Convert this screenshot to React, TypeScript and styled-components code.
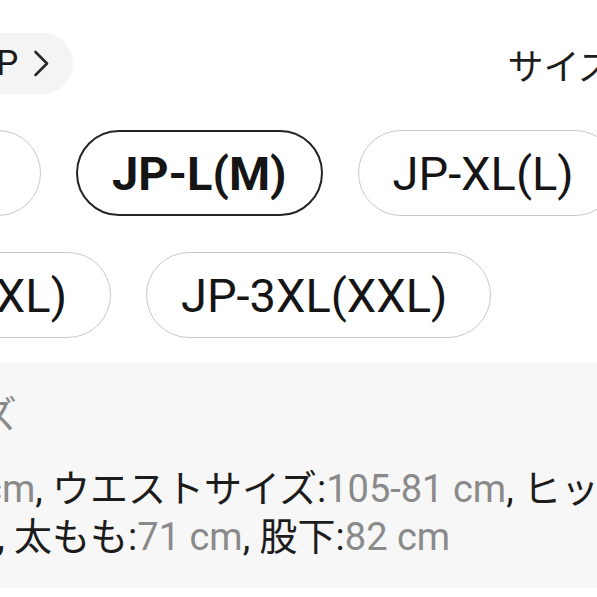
import styled, { createGlobalStyle } from 'styled-components';

const GlobalStyle = createGlobalStyle`
  html, body {
    margin: 0;
    padding: 0;
    background: #ffffff;
  }
  body {
    font-family: Roboto, 'Noto Sans CJK JP', sans-serif;
    color: #1c1c1c;
  }
`;

// rows of size chips, the page is scrolled so the first ones are cut
const sizes = [
  ['JP-M(S)', 'JP-L(M)', 'JP-XL(L)'],
  ['JP-2XL(XL)', 'JP-3XL(XXL)'],
];
const rowShift = [-208, -205];
const selected = 'JP-L(M)';

export default function App() {
  return (
    <Frame>
      <GlobalStyle />
      <TopBar>
        <Selector>
          <SelectorText>JP</SelectorText>
          <svg width='17' height='27' viewBox='0 0 17 27'>
            <polyline
              points='2.5,2 14,13.5 2.5,25'
              fill='none'
              stroke='#2a2a2a'
              strokeWidth='2.6'
              strokeLinecap='round'
              strokeLinejoin='round'
            />
          </svg>
        </Selector>
        <GuideLink>サイズガイド</GuideLink>
      </TopBar>

      <SizeList>
        {sizes.map((row, i) => (
          <SizeRow key={i} shift={rowShift[i]}>
            {row.map((s) => (
              <SizePill key={s} active={s === selected}>
                {s}
              </SizePill>
            ))}
          </SizeRow>
        ))}
      </SizeList>

      <InfoPanel>
        <Line shift={-210}>
          <Muted>モデルサイズ</Muted>
        </Line>
        <Specs>
          <Line shift={-18}>
            <Muted>cm</Muted>, ウエストサイズ:<Muted>105-81 cm</Muted>, ヒップサイズ:
            <Muted>110 cm</Muted>
          </Line>
          <Line shift={-56}>
            <Muted>cm</Muted>, 太もも:<Muted>71 cm</Muted>, 股下:<Muted>82 cm</Muted>
          </Line>
        </Specs>
      </InfoPanel>
    </Frame>
  );
}

const Frame = styled.div`
  width: 597px;
  height: 597px;
  overflow: hidden;
  background: #ffffff;
`;

const TopBar = styled.div`
  display: flex;
  align-items: center;
  gap: 434px;
  padding-top: 33px;
  width: 1200px;
  margin-left: -47px;
`;

const Selector = styled.div`
  display: flex;
  align-items: center;
  gap: 15px;
  height: 61px;
  padding: 0 23px 0 24px;
  background: #f4f4f4;
  border-radius: 0 31px 31px 0;
  box-sizing: border-box;
`;

const SelectorText = styled.span`
  font-size: 35px;
  color: #1c1c1c;
`;

const GuideLink = styled.span`
  font-size: 36px;
  color: #1c1c1c;
  white-space: nowrap;
`;

const SizeList = styled.div`
  display: flex;
  flex-direction: column;
  gap: 36px;
  margin-top: 36px;
`;

const SizeRow = styled.div<{ shift: number }>`
  display: flex;
  gap: 35px;
  width: 1200px;
  margin-left: ${(p) => p.shift}px;
`;

const SizePill = styled.div<{ active?: boolean }>`
  display: flex;
  align-items: center;
  height: 86px;
  padding: ${(p) => (p.active ? '0 34px' : '0 43px 0 34px')};
  box-sizing: border-box;
  border-radius: 43px;
  border: ${(p) => (p.active ? '2.5px solid #242424' : '1.5px solid #c9c9c9')};
  font-size: 47px;
  font-weight: ${(p) => (p.active ? 700 : 400)};
  color: #151515;
  white-space: nowrap;
`;

const InfoPanel = styled.div`
  margin-top: 25px;
  height: 225px;
  box-sizing: border-box;
  padding-top: 28px;
  background: #f7f7f7;
  font-size: 38px;
  line-height: 48px;
`;

const Specs = styled.div`
  margin-top: 26px;
`;

const Line = styled.div<{ shift: number }>`
  white-space: nowrap;
  margin-left: ${(p) => p.shift}px;
  color: #1c1c1c;
`;

const Muted = styled.span`
  color: #8a8a8a;
`;
